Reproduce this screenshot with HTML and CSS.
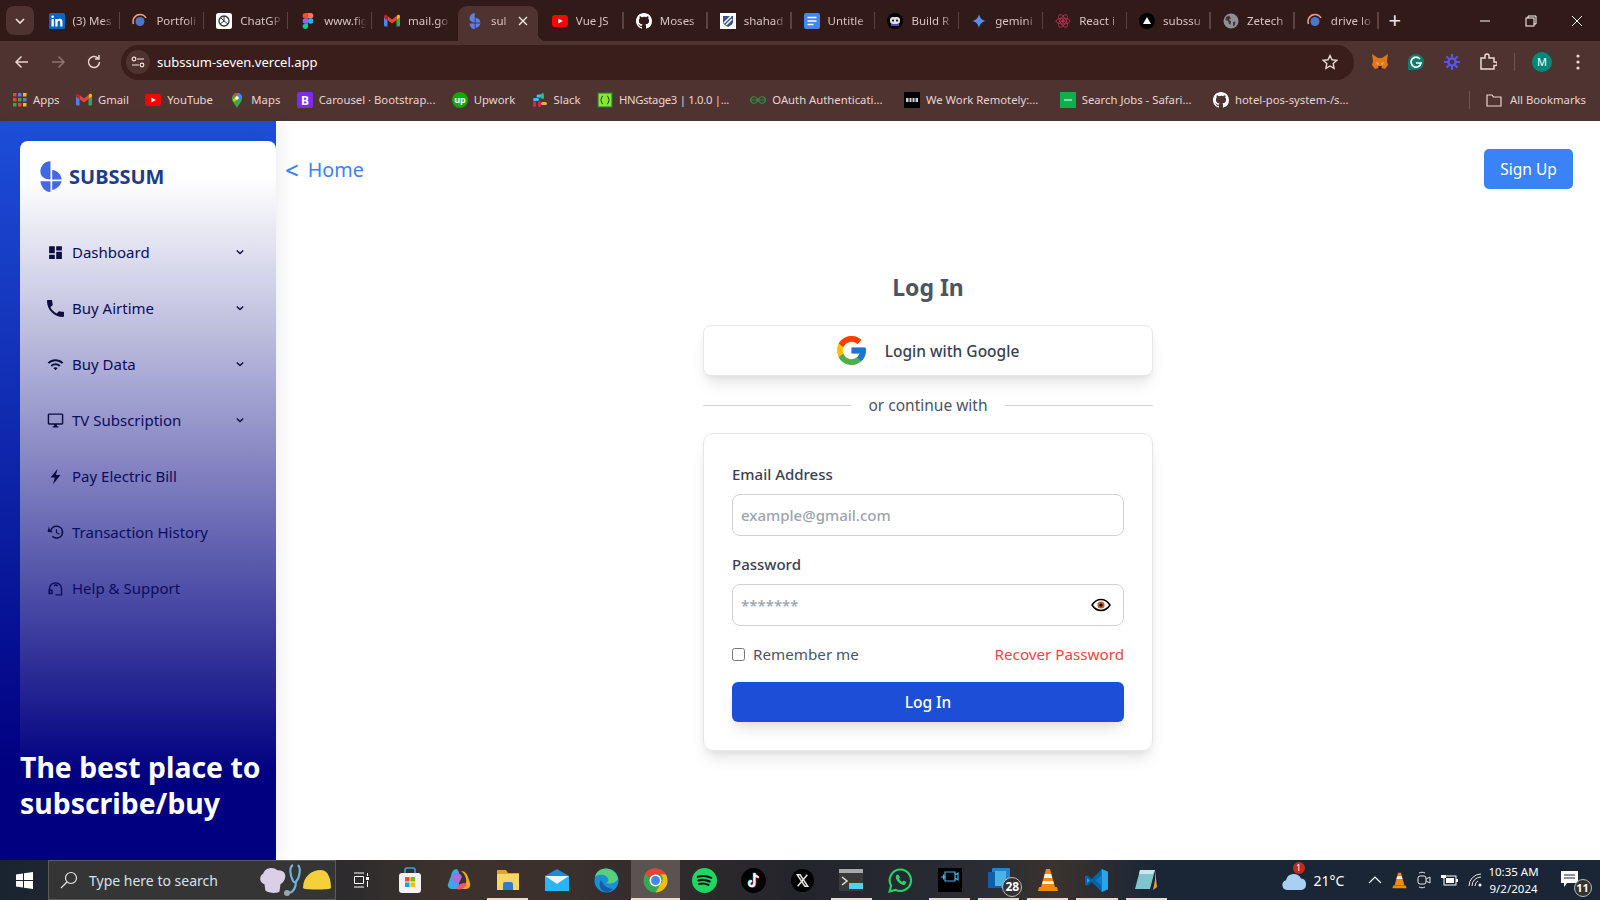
FILE: index.html
```html
<!DOCTYPE html>
<html lang="en">
<head>
    <meta charset="UTF-8">
    <meta name="viewport" content="width=device-width, initial-scale=1.0">
    <title>Subssum - Log In</title>
    <link rel="stylesheet" href="styles.css">
</head>
<body>
    <svg class="defs" width="0" height="0">
        <symbol id="github" viewBox="0 0 16 16"><path fill="#fff" d="M8 0C3.58 0 0 3.58 0 8c0 3.54 2.29 6.53 5.47 7.59.4.07.55-.17.55-.38v-1.34c-2.23.48-2.7-1.07-2.7-1.07-.36-.93-.89-1.17-.89-1.17-.73-.5.05-.49.05-.49.8.06 1.23.82 1.23.82.71 1.23 1.87.87 2.33.66.07-.52.28-.87.5-1.07-1.77-.2-3.64-.89-3.64-3.95 0-.87.31-1.59.82-2.15-.08-.2-.36-1.02.08-2.12 0 0 .67-.21 2.2.82A7.7 7.7 0 0 1 8 3.87c.68 0 1.36.09 2 .27 1.53-1.04 2.2-.82 2.2-.82.44 1.1.16 1.92.08 2.12.51.56.82 1.27.82 2.15 0 3.07-1.87 3.75-3.65 3.95.29.25.54.73.54 1.48v2.2c0 .21.15.46.55.38A8 8 0 0 0 16 8c0-4.42-3.58-8-8-8z"/></symbol>
        <symbol id="gmail" viewBox="0 0 16 16"><path fill="#4285f4" d="M1 13.5h2.5V7L0 4.5V12.500a1 1 0 0 0 1 1z"/><path fill="#34a853" d="M12.500 13.500H15a1 1 0 0 0 1-1V4.500L12.500 7z"/><path fill="#fbbc04" d="M12.500 3v4L16 4.500V3.300c0-1.200-1.400-1.900-2.400-1.200z"/><path fill="#ea4335" d="M3.500 7V3L8 6.400 12.500 3v4L8 10.400z"/><path fill="#c5221f" d="M0 3.300v1.200L3.500 7V3L2.400 2.100C1.400 1.400 0 2.100 0 3.300z"/></symbol>
        <symbol id="youtube" viewBox="0 0 16 16"><rect y="2" width="16" height="12" rx="3" fill="#f00"/><path fill="#fff" d="M6.300 5.400v5.200L10.800 8z"/></symbol>
        <symbol id="globe" viewBox="0 0 16 16"><circle cx="8" cy="8" r="7.500" fill="#8a9199"/><path fill="#4f3331" d="M6 2.500 3 4l-.5 3L5 8l1 3 1.500.5.500-3-2-2 2-1zM10 9l2.500-.5L12 12l-2 1.500z"/></symbol>
        <symbol id="ring" viewBox="0 0 16 16"><circle cx="8" cy="8.500" r="4.500" fill="#4a78c9"/><path fill="none" stroke="#f0a090" stroke-width="1.500" d="M1.500 11A7 7 0 0 1 8 1.500 7 7 0 0 1 14 5"/></symbol>
    </svg>

    <div class="browser">
        <div class="tabstrip">
            <div class="tab-search"><svg width="10" height="6" viewBox="0 0 10 6"><path d="M1 1l4 4 4-4" fill="none" stroke="#f2e4e2" stroke-width="1.600"/></svg></div>
            <div class="tab"><svg width="16" height="16" viewBox="0 0 16 16"><rect width="16" height="16" rx="1.500" fill="#0a66c2"/><path fill="#fff" d="M2.500 6h2.300v7.500H2.500zM3.600 2.500a1.300 1.300 0 1 1 0 2.600 1.300 1.300 0 0 1 0-2.600zM6.300 6h2.200v1c.4-.7 1.200-1.200 2.300-1.200 2.200 0 2.700 1.400 2.700 3.300v4.400h-2.300V9.600c0-.9 0-1.900-1.200-1.900s-1.400.9-1.400 1.900v3.900H6.300z"/></svg><span>(3) Mes</span></div>
            <div class="tab"><svg width="16" height="16"><use href="#ring"/></svg><span>Portfoli</span></div>
            <div class="tab"><svg width="16" height="16" viewBox="0 0 16 16"><rect width="16" height="16" rx="2.500" fill="#fff"/><circle cx="8" cy="8" r="5" fill="none" stroke="#333" stroke-width="1.300"/><path d="M8 3v5l4 3M4 11l4-3M5 5l3 3" fill="none" stroke="#333"/></svg><span>ChatGP</span></div>
            <div class="tab"><svg width="16" height="16" viewBox="0 0 12 18"><path fill="#f24e1e" d="M0 3a3 3 0 0 1 3-3h3v6H3a3 3 0 0 1-3-3z"/><path fill="#ff7262" d="M6 0h3a3 3 0 0 1 0 6H6z"/><path fill="#a259ff" d="M0 9a3 3 0 0 1 3-3h3v6H3a3 3 0 0 1-3-3z"/><circle cx="9" cy="9" r="3" fill="#1abcfe"/><path fill="#0acf83" d="M0 15a3 3 0 0 1 3-3h3v3a3 3 0 0 1-6 0z"/></svg><span>www.fig</span></div>
            <div class="tab"><svg width="16" height="16"><use href="#gmail"/></svg><span>mail.go</span></div>
            <div class="tab tab-active"><svg class="logo-small" width="16" height="16" viewBox="0 0 63 92"><path d="M30 0C12 2 0 14 0 32c0 13 12 23 30 23zM35 27c15 1 27 13 28 28H35zM0 60h30v32C14 92 3 78 0 60zM35 60h28C60 72 50 83 35 86z"/></svg><span>sul</span><svg class="tab-close" width="10" height="10" viewBox="0 0 10 10"><path d="M1 1l8 8M9 1L1 9" stroke="#f2e4e2" stroke-width="1.400"/></svg></div>
            <div class="tab"><svg width="16" height="16"><use href="#youtube"/></svg><span>Vue JS</span></div>
            <div class="tab"><svg width="16" height="16"><use href="#github"/></svg><span>Moses</span></div>
            <div class="tab"><svg width="16" height="16" viewBox="0 0 16 16"><rect width="16" height="16" fill="#fff"/><path fill="#3a4f8f" d="M3 3h10v6c0 2-3 4-5 5-2-1-5-3-5-5z"/><path stroke="#fff" stroke-width="1.500" d="M4 10l7-7M6 12l6-6"/></svg><span>shahad</span></div>
            <div class="tab"><svg width="16" height="16" viewBox="0 0 16 16"><rect width="16" height="16" rx="2" fill="#4285f4"/><path stroke="#fff" stroke-width="1.600" d="M3.500 4.500h9M3.500 8h9M3.500 11.500h6"/></svg><span>Untitle</span></div>
            <div class="tab"><svg width="16" height="16" viewBox="0 0 16 16"><circle cx="8" cy="8" r="8" fill="#000"/><rect x="3" y="4" width="10" height="7" rx="3" fill="#ddd"/><circle cx="6" cy="7.500" r="1" fill="#000"/><circle cx="10" cy="7.500" r="1" fill="#000"/><path d="M4 12h8" stroke="#8a5cf0" stroke-width="1.500"/></svg><span>Build R</span></div>
            <div class="tab"><svg width="16" height="16" viewBox="0 0 16 16"><path fill="#5b8def" d="M8 1c.6 3.800 3.200 6.400 7 7-3.800.6-6.400 3.200-7 7-.6-3.800-3.200-6.400-7-7 3.800-.6 6.400-3.200 7-7z"/></svg><span>gemini</span></div>
            <div class="tab"><svg width="16" height="16" viewBox="0 0 16 16" fill="none" stroke="#b0304f"><ellipse cx="8" cy="8" rx="7" ry="3"/><ellipse cx="8" cy="8" rx="7" ry="3" transform="rotate(60 8 8)"/><ellipse cx="8" cy="8" rx="7" ry="3" transform="rotate(120 8 8)"/><circle cx="8" cy="8" r="1.300" fill="#b0304f"/></svg><span>React i</span></div>
            <div class="tab"><svg width="16" height="16" viewBox="0 0 16 16"><circle cx="8" cy="8" r="8" fill="#000"/><path fill="#fff" d="M8 4l4 7H4z"/></svg><span>subssu</span></div>
            <div class="tab"><svg width="16" height="16"><use href="#globe"/></svg><span>Zetech</span></div>
            <div class="tab"><svg width="16" height="16"><use href="#ring"/></svg><span>drive lo</span></div>
            <div class="tab-new">+</div>
            <div class="win-controls">
                <svg width="12" height="12" viewBox="0 0 12 12"><path d="M1 6h10" stroke="#fff"/></svg>
                <svg width="12" height="12" viewBox="0 0 12 12" fill="none" stroke="#fff"><rect x="1" y="3" width="8" height="8"/><path d="M3 3V1h8v8H9"/></svg>
                <svg width="12" height="12" viewBox="0 0 12 12"><path d="M1 1l10 10M11 1L1 11" stroke="#fff"/></svg>
            </div>
        </div>

        <div class="toolbar">
            <svg class="tool" width="16" height="16" viewBox="0 0 16 16" fill="none" stroke="#e8d5d2" stroke-width="1.500"><path d="M14 8H2M7.500 2.500 2 8l5.500 5.500"/></svg>
            <svg class="tool" width="16" height="16" viewBox="0 0 16 16" fill="none" stroke="#8f7673" stroke-width="1.500"><path d="M2 8h12M8.500 2.500 14 8l-5.500 5.500"/></svg>
            <svg class="tool" width="16" height="16" viewBox="0 0 16 16" fill="none" stroke="#e8d5d2" stroke-width="1.500"><path d="M13.500 8A5.500 5.500 0 1 1 12 4.200M13 1v4H9"/></svg>
            <div class="address">
                <div class="site-info"><svg width="14" height="14" viewBox="0 0 14 14" fill="none" stroke="#f2e4e2" stroke-width="1.200"><path d="M6 4h7M1 10h7"/><circle cx="3" cy="4" r="1.800"/><circle cx="11" cy="10" r="1.800"/></svg></div>
                <span class="url">subssum-seven.vercel.app</span>
                <svg class="star" width="16" height="16" viewBox="0 0 16 16"><path d="M8 1.500l2 4.300 4.700.6-3.500 3.200.9 4.700L8 12l-4.100 2.300.9-4.700L1.300 6.400 6 5.800z" fill="none" stroke="#eadbd8" stroke-width="1.400"/></svg>
            </div>
            <div class="extensions">
                <svg width="18" height="18" viewBox="0 0 18 18"><path fill="#e2761b" d="M1 1l6 4h4l6-4-1 7 1 4-3 4-3-1H7l-3 1-3-4 1-4z"/><path fill="#f6a55b" d="M5 9l3 1-1 3zM13 9l-3 1 1 3z"/><path fill="#33261d" d="M7 13h4l-1 3H8z"/></svg>
                <svg width="18" height="18" viewBox="0 0 18 18"><path fill="#0f7d6c" d="M9 1a8 8 0 0 1 8 8 8 8 0 0 1-8 8H1V9a8 8 0 0 1 8-8z"/><path d="M13 6a5 5 0 1 0 1 4H9" fill="none" stroke="#fff" stroke-width="1.700"/></svg>
                <svg width="18" height="18" viewBox="0 0 18 18" stroke="#5a55e8" stroke-width="2.200"><path d="M9 1v16M1 9h16M3.300 3.300l11.400 11.400M14.700 3.300 3.300 14.700"/><circle cx="9" cy="9" r="3.500" fill="#4f3331"/></svg>
                <svg width="18" height="18" viewBox="0 0 18 18" fill="none" stroke="#eadbd8" stroke-width="1.500"><path d="M2 5h4V3a2 2 0 0 1 4 0v2h5v4h1.500a1.800 1.800 0 0 1 0 3.600H15V16H2z"/></svg>
                <span class="tool-sep"></span>
                <span class="avatar">M</span>
                <svg class="tool-dots" width="4" height="16" viewBox="0 0 4 16" fill="#eadbd8"><circle cx="2" cy="2" r="1.600"/><circle cx="2" cy="8" r="1.600"/><circle cx="2" cy="14" r="1.600"/></svg>
            </div>
        </div>

        <div class="bookmarks">
            <a class="bm"><svg width="14" height="14" viewBox="0 0 14 14"><g fill="#ea4335"><rect width="3.500" height="3.500"/><rect x="5" width="3.500" height="3.500" fill="#4285f4"/><rect x="10" width="3.500" height="3.500" fill="#fbbc04"/><rect y="5" width="3.500" height="3.500" fill="#ea4335"/><rect x="5" y="5" width="3.500" height="3.500" fill="#34a853"/><rect x="10" y="5" width="3.500" height="3.500" fill="#4285f4"/><rect y="10" width="3.500" height="3.500" fill="#34a853"/><rect x="5" y="10" width="3.500" height="3.500" fill="#ea4335"/><rect x="10" y="10" width="3.500" height="3.500" fill="#fbbc04"/></g></svg>Apps</a>
            <a class="bm"><svg width="16" height="16"><use href="#gmail"/></svg>Gmail</a>
            <a class="bm"><svg width="16" height="16"><use href="#youtube"/></svg>YouTube</a>
            <a class="bm"><svg width="16" height="16" viewBox="0 0 16 16"><path fill="#34a853" d="M8 16C6 12 3 10 3 6a5 5 0 0 1 10 0c0 4-3 6-5 10z"/><path fill="#fbbc04" d="M3.500 8 8 3.500l1 3L5 10z"/><path fill="#ea4335" d="M4 3a5 5 0 0 1 5-2L6 5z"/><path fill="#4285f4" d="M9 1a5 5 0 0 1 4 5L9 8z"/><circle cx="8" cy="6" r="1.700" fill="#fff"/></svg>Maps</a>
            <a class="bm"><svg width="16" height="16" viewBox="0 0 16 16"><rect width="16" height="16" rx="2" fill="#7c2bf2"/><text x="8" y="12.500" text-anchor="middle" class="svg-b">B</text></svg>Carousel · Bootstrap...</a>
            <a class="bm"><svg width="16" height="16" viewBox="0 0 16 16"><circle cx="8" cy="8" r="8" fill="#14a800"/><text x="8" y="11" text-anchor="middle" class="svg-up">up</text></svg>Upwork</a>
            <a class="bm"><svg width="16" height="16" viewBox="0 0 16 16"><rect x="6" y="1" width="3" height="6" rx="1.500" fill="#36c5f0" transform="rotate(90 7.500 4)"/><rect x="9" y="1" width="3" height="6" rx="1.500" fill="#2eb67d"/><rect x="1" y="9" width="3" height="6" rx="1.500" fill="#e01e5a"/><rect x="6" y="9" width="3" height="6" rx="1.500" fill="#e01e5a"/><rect x="9" y="10" width="6" height="3" rx="1.500" fill="#ecb22e"/><rect x="1" y="6" width="6" height="3" rx="1.500" fill="#36c5f0"/></svg>Slack</a>
            <a class="bm bm-tight"><svg width="16" height="16" viewBox="0 0 16 16"><rect width="16" height="16" fill="#2d5f3a"/><rect x="1.500" y="1.500" width="13" height="13" fill="#85ea2d"/><path d="M6 4C4 4 5 8 3.500 8 5 8 4 12 6 12M10 4c2 0 1 4 2.500 4-1.500 0-.5 4-2.500 4" fill="none" stroke="#173647"/></svg>HNGstage3 | 1.0.0 |...</a>
            <a class="bm bm-wide"><svg width="16" height="16" viewBox="0 0 16 16" fill="none" stroke="#2f8d46" stroke-width="1.200"><path d="M8 8h7.500A3.500 3.500 0 0 0 9 6.500L8 8l-1 1.500A3.500 3.500 0 0 1 .5 8H8M8 8l1 1.500A3.500 3.500 0 0 0 15.500 8M8 8 7 6.500A3.500 3.500 0 0 0 .5 8"/></svg>OAuth Authenticati...</a>
            <a class="bm bm-wide"><svg width="16" height="16" viewBox="0 0 16 16"><rect width="16" height="16" fill="#000"/><path d="M2 6h12v4H2z" fill="#cfcfcf"/><path d="M5 6v4M8 6v4M11 6v4" stroke="#000"/></svg>We Work Remotely:...</a>
            <a class="bm bm-wide"><svg width="16" height="16" viewBox="0 0 16 16"><rect width="16" height="16" fill="#0db14b"/><path d="M4 8h8" stroke="#fff"/></svg>Search Jobs - Safari...</a>
            <a class="bm bm-wide"><svg width="16" height="16"><use href="#github"/></svg>hotel-pos-system-/s...</a>
            <div class="all-bookmarks">
                <svg width="16" height="16" viewBox="0 0 16 16"><path d="M1 3h5l1.500 2H15v9H1z" fill="none" stroke="#e8d5d2" stroke-width="1.200"/></svg>All Bookmarks
            </div>
        </div>
    </div>

    <div class="app">
        <aside class="sidebar">
            <div class="side-inner">
                <div class="brand">
                    <svg width="22" height="31" viewBox="0 0 63 92" fill="#4169e1"><path d="M30 0C12 2 0 14 0 32c0 13 12 23 30 23zM35 27c15 1 27 13 28 28H35zM0 60h30v32C14 92 3 78 0 60zM35 60h28C60 72 50 83 35 86z"/></svg>
                    <span>SUBSSUM</span>
                </div>
                <nav class="side-nav">
                    <a class="nav-item"><svg class="nav-ic" viewBox="0 0 24 24"><path d="M3 13h8V3H3v10zm0 8h8v-6H3v6zm10 0h8V11h-8v10zm0-18v6h8V3h-8z"/></svg><span>Dashboard</span><svg class="caret" viewBox="0 0 10 6"><path d="M1 1l4 4 4-4"/></svg></a>
                    <a class="nav-item"><svg class="nav-ic" viewBox="3 3 18 18"><path d="M6.620 10.790c1.440 2.830 3.760 5.140 6.590 6.590l2.200-2.200c.27-.27.67-.36 1.020-.24 1.120.37 2.330.57 3.570.57.55 0 1 .45 1 1V20c0 .55-.45 1-1 1-9.390 0-17-7.610-17-17 0-.55.45-1 1-1h3.500c.55 0 1 .45 1 1 0 1.250.2 2.450.57 3.570.11.35.03.74-.25 1.020l-2.200 2.200z"/></svg><span>Buy Airtime</span><svg class="caret" viewBox="0 0 10 6"><path d="M1 1l4 4 4-4"/></svg></a>
                    <a class="nav-item"><svg class="nav-ic" viewBox="0 0 24 24"><path d="M1 9l2 2c4.970-4.970 13.030-4.970 18 0l2-2C16.930 2.930 7.080 2.930 1 9zm8 8l3 3 3-3c-1.650-1.660-4.340-1.660-6 0zm-4-4l2 2c2.760-2.760 7.240-2.760 10 0l2-2C15.140 9.140 8.870 9.140 5 13z"/></svg><span>Buy Data</span><svg class="caret" viewBox="0 0 10 6"><path d="M1 1l4 4 4-4"/></svg></a>
                    <a class="nav-item"><svg class="nav-ic" viewBox="0 0 24 24"><path d="M21 2H3c-1.100 0-2 .9-2 2v12c0 1.100.9 2 2 2h7v2H8v2h8v-2h-2v-2h7c1.100 0 2-.9 2-2V4c0-1.100-.9-2-2-2zm0 14H3V4h18v12z"/></svg><span>TV Subscription</span><svg class="caret" viewBox="0 0 10 6"><path d="M1 1l4 4 4-4"/></svg></a>
                    <a class="nav-item"><svg class="nav-ic" viewBox="0 0 24 24"><path d="M15 1 5 13.500h6L8.500 23 19 10h-6.500z"/></svg><span>Pay Electric Bill</span></a>
                    <a class="nav-item"><svg class="nav-ic" viewBox="0 1 23 23"><path d="M13 3a9 9 0 0 0-8.700 6.700L2.500 4.500.8 11.500l6.800 1-1.500-2.300A7 7 0 1 1 13 19a7 7 0 0 1-5-2.100l-1.400 1.400A9 9 0 1 0 13 3zm-1 5v5l4.300 2.500.7-1.200-3.500-2.100V8z"/></svg><span>Transaction History</span></a>
                    <a class="nav-item"><svg class="nav-ic nav-ic-line" viewBox="0 0 24 24"><path d="M3.500 19v-6.500a8.500 8.500 0 0 1 17 0V19M3 14.500h4V19H3zM20.500 14.500V21H12M10 8.500a3 3 0 0 1 5 0"/></svg><span>Help &amp; Support</span></a>
                </nav>
                <h2 class="tagline">The best place to subscribe/buy</h2>
            </div>
        </aside>

        <main class="content">
            <header class="top-row">
                <a class="home-link"><span class="home-lt">&lt;</span> Home</a>
                <button class="signup-btn">Sign Up</button>
            </header>
            <section class="login">
                <h1>Log In</h1>
                <button class="google-btn">
                    <svg width="29" height="29" viewBox="4 4 40 40"><path fill="#FFC107" d="M43.611 20.083H42V20H24v8h11.303c-1.649 4.657-6.080 8-11.303 8-6.627 0-12-5.373-12-12s5.373-12 12-12c3.059 0 5.842 1.154 7.961 3.039l5.657-5.657C34.046 6.053 29.268 4 24 4 12.955 4 4 12.955 4 24s8.955 20 20 20 20-8.955 20-20c0-1.341-.138-2.650-.389-3.917z"/><path fill="#FF3D00" d="M6.306 14.691l6.571 4.819C14.655 15.108 18.961 12 24 12c3.059 0 5.842 1.154 7.961 3.039l5.657-5.657C34.046 6.053 29.268 4 24 4 16.318 4 9.656 8.337 6.306 14.691z"/><path fill="#4CAF50" d="M24 44c5.166 0 9.860-1.977 13.409-5.192l-6.190-5.238A11.910 11.910 0 0 1 24 36c-5.202 0-9.619-3.317-11.283-7.946l-6.522 5.025C9.505 39.556 16.227 44 24 44z"/><path fill="#1976D2" d="M43.611 20.083H42V20H24v8h11.303a12.040 12.040 0 0 1-4.087 5.571l.003-.002 6.190 5.238C36.971 39.205 44 34 44 24c0-1.341-.138-2.650-.389-3.917z"/></svg>
                    Login with Google
                </button>
                <div class="divider"><span>or continue with</span></div>
                <form class="login-card">
                    <label for="email">Email Address</label>
                    <input id="email" type="email" placeholder="example@gmail.com">
                    <label for="password">Password</label>
                    <div class="pass-wrap">
                        <input id="password" type="password" placeholder="*******">
                        <svg class="eye" width="20" height="14" viewBox="0 0 20 14"><path d="M1 7c2.500-3.800 5.500-5.500 9-5.500S16.500 3.200 19 7c-2.500 3.800-5.500 5.500-9 5.500S3.500 10.800 1 7z" fill="#fff" stroke="#000" stroke-width="1.500"/><circle cx="10" cy="7" r="3.600" fill="#c85a17"/><circle cx="10" cy="7" r="1.600" fill="#000"/></svg>
                    </div>
                    <div class="form-row">
                        <label class="remember"><input type="checkbox">Remember me</label>
                        <a class="recover">Recover Password</a>
                    </div>
                    <button type="button" class="login-btn">Log In</button>
                </form>
            </section>
        </main>
    </div>

    <div class="taskbar">
        <div class="start"><svg width="17" height="17" viewBox="0 0 17 17" fill="#fff"><path d="M0 2.500 7 1.500v6.500H0zM8 1.300 17 0v8H8zM0 9h7v6.500l-7-1zM8 9h9v8l-9-1.300z"/></svg></div>
        <div class="task-search">
            <svg width="18" height="18" viewBox="0 0 18 18" fill="none" stroke="#e6e6e6" stroke-width="1.200"><circle cx="11" cy="7" r="5.500"/><path d="M7 11l-6 6"/></svg>
            <span>Type here to search</span>
            <div class="search-art">
                <svg width="30" height="30" viewBox="0 0 28 28"><path fill="#d9cfe6" d="M6 18c-4-1-6-7-1-10 1-5 9-7 13-3 5-1 9 3 7 8-1 3-3 4-4 5l-1 7c-4 2-10 1-13-1z"/></svg>
                <svg width="24" height="34" viewBox="0 0 24 34" fill="none" stroke="#6fb2dc" stroke-width="2.200"><path d="M10 2C6 4 7 12 10 18c2 3 5-1 6-5 1-4 1-9-1-11M13 18c0 7-3 11-7 12"/><circle cx="4" cy="30" r="3" fill="#9aa5ad" stroke="none"/></svg>
                <svg width="30" height="24" viewBox="0 0 30 24"><path fill="#f5cf3c" d="M1 20C1 9 9 2 19 2c7 0 10 9 10 18 0 2-28 2-28 0z"/></svg>
            </div>
        </div>
        <div class="task-item"><svg width="16" height="16" viewBox="0 0 16 16" fill="none" stroke="#fff"><path d="M1 1h10M1 15h10M1.500 4.500h9v7h-9z"/><path d="M14.500 1v3M14.500 9v6" /><rect x="13" y="5" width="3" height="3" fill="#fff" stroke="none"/></svg></div>
        <div class="task-item"><svg width="24" height="26" viewBox="0 0 24 26"><path d="M7 7V3a2 2 0 0 1 2-2h6a2 2 0 0 1 2 2v4" fill="none" stroke="#2fa8e0" stroke-width="1.600"/><rect x="1" y="6" width="22" height="20" rx="3" fill="#f2f2f2"/><rect x="7" y="10" width="4.500" height="4.500" fill="#f25022"/><rect x="12.500" y="10" width="4.500" height="4.500" fill="#7fba00"/><rect x="7" y="15.500" width="4.500" height="4.500" fill="#00a4ef"/><rect x="12.500" y="15.500" width="4.500" height="4.500" fill="#ffb900"/></svg></div>
        <div class="task-item"><svg width="24" height="24" viewBox="0 0 24 24"><path fill="#3ba7e8" d="M10 1C6 1 5 4 4 8L1 16c-1 3 2 5 4 5h4c2 0 3-2 3-4V4z"/><path fill="#b266e0" d="M6 7c3-3 8-2 9 2l-3 6H8c-2-2-3-6-2-8z"/><path fill="#f5a623" d="M14 3c4 0 6 3 7 6l2 6c1 3-1 6-4 6h-7c4 0 6-3 7-6 1-4-1-9-5-12z"/><path fill="#f2556f" d="M9 21c3 1 8 0 10-3 1-2 0-3-2-3l-4 1z"/></svg></div>
        <div class="task-item on"><svg width="24" height="22" viewBox="0 0 24 22"><path fill="#e0a526" d="M1 1h9l2 3h11v3H1z"/><path fill="#f7d764" d="M1 5h22v16H1z"/><path fill="#2c7fc4" d="M7 21v-6a2 2 0 0 1 2-2h6a2 2 0 0 1 2 2v6z"/></svg></div>
        <div class="task-item"><svg width="24" height="24" viewBox="0 0 24 24"><path fill="#1f8ad8" d="M12 1 0 8v15h24V8z"/><path fill="#29b6f6" d="M0 8l12 8 12-8v15H0z"/><path fill="#e9f6fd" d="M0 8h24l-12 8z"/></svg></div>
        <div class="task-item"><svg width="25" height="25" viewBox="0 0 25 25"><circle cx="12.500" cy="12.500" r="12" fill="#1b8fd6"/><path fill="#56d17b" d="M24 11C23 4 17 .5 12 .5 6 .5 2 4 1 9c3-3 9-3 12 0 2 2 2 5-1 6 4 1 9 1 12-4z"/><path fill="#0f5ea8" d="M12 24C6 23 4 16 7 12c2 4 4 8 12 9-2 2-4 3-7 3z"/></svg></div>
        <div class="task-item task-active"><svg width="25" height="25" viewBox="0 0 24 24"><circle cx="12" cy="12" r="11.500" fill="#34a853"/><path fill="#ea4335" d="M12 .5a11.500 11.500 0 0 1 10 5.800H12a5.700 5.700 0 0 0-5.300 3.500L2 5.300A11.500 11.500 0 0 1 12 .5z"/><path fill="#fbbc04" d="M22 6.300a11.500 11.500 0 0 1-9.900 17.200l4.800-8.400a5.700 5.700 0 0 0 0-8.800z"/><circle cx="12" cy="12" r="5.700" fill="#fff"/><circle cx="12" cy="12" r="4.300" fill="#4285f4"/></svg></div>
        <div class="task-item"><svg width="25" height="25" viewBox="0 0 24 24"><circle cx="12" cy="12" r="12" fill="#1ed760"/><path d="M5.500 8.500c4-1.200 9-1 13 1M6 12c3.500-1 7.500-.8 11 1M6.800 15.300c3-.8 6-.6 9 .9" fill="none" stroke="#111" stroke-width="2" stroke-linecap="round"/></svg></div>
        <div class="task-item"><svg width="25" height="25" viewBox="0 0 24 24"><circle cx="12" cy="12" r="12" fill="#000"/><path d="M13 5v10a2.500 2.500 0 1 1-2.500-2.500M13 5c.3 2.200 1.700 3.500 4 3.800" fill="none" stroke="#25f4ee" stroke-width="2.200" transform="translate(-.6 -.4)"/><path d="M13 5v10a2.500 2.500 0 1 1-2.500-2.500M13 5c.3 2.200 1.700 3.500 4 3.800" fill="none" stroke="#fe2c55" stroke-width="2.200" transform="translate(.6 .4)"/><path d="M13 5v10a2.500 2.500 0 1 1-2.500-2.500M13 5c.3 2.200 1.700 3.500 4 3.800" fill="none" stroke="#fff" stroke-width="1.800"/></svg></div>
        <div class="task-item"><svg width="23" height="23" viewBox="0 0 24 24"><circle cx="12" cy="12" r="12" fill="#000"/><path d="M6.500 6h3l8 12h-3zM17 6l-10 12" fill="none" stroke="#e8e8e8" stroke-width="1.500"/></svg></div>
        <div class="task-item on"><svg width="24" height="22" viewBox="0 0 24 22"><rect width="24" height="22" rx="1" fill="#3a3a3a"/><rect width="24" height="4" fill="#a9a9a9"/><path d="M3 8l5 4-5 4" fill="none" stroke="#ddd" stroke-width="1.600"/><rect x="10" y="14" width="14" height="6" fill="#52d0f2"/></svg></div>
        <div class="task-item"><svg width="25" height="25" viewBox="0 0 24 24"><path d="M12 1.500A10.300 10.300 0 0 0 3 17l-1.500 5.500 5.700-1.500A10.300 10.300 0 1 0 12 1.500z" fill="none" stroke="#25d366" stroke-width="2"/><path fill="#25d366" d="M8.500 6.500c-1.500 1-1.500 3.500.5 6s5 4.500 7 3.500c1.500-1 1.500-2 1.500-2.500L15 12l-1.300 1.300c-1.200-.5-2.700-2-3.200-3.200L11.500 9 10 6.500z"/></svg></div>
        <div class="task-item on"><svg width="24" height="24" viewBox="0 0 24 24"><rect width="24" height="24" fill="#000"/><path d="M7 4h10v9H7zM17 7l3-2v7l-3-2M3 9h5M5.500 6.500v5" fill="none" stroke="#3fb8e8" stroke-width="1.200"/></svg></div>
        <div class="task-item on"><svg width="22" height="24" viewBox="0 0 22 24"><rect x="4" y="0" width="18" height="20" rx="1" fill="#2584c9"/><rect x="0" y="4" width="13" height="16" fill="#0f5ea8"/><rect x="7" y="3" width="11" height="15" fill="#4fb2e5"/></svg><span class="badge-num">28</span></div>
        <div class="task-item on"><svg width="20" height="24" viewBox="0 0 20 24"><path fill="#f08a00" d="M8 1h4l5 18H3z"/><path fill="#f2f2f2" d="M6.800 6h6.400l1 4H5.800zM5 13h10l1 3H4z"/><path fill="#f08a00" d="M1 19h18l1 4H0z"/></svg></div>
        <div class="task-item on"><svg width="25" height="25" viewBox="0 0 24 24"><path fill="#0065a9" d="M17 1 7.500 10.500 3 7 1 8v8l2 1 4.500-3.500L17 23l6-2.500v-17z"/><path fill="#2aa4f0" d="M17 1l6 2.500v17L17 23zM3 9.500v5L5.500 12z"/><path fill="#0f7bc4" d="M17 7l-6 5 6 5z"/></svg></div>
        <div class="task-item on"><svg width="24" height="24" viewBox="0 0 24 24"><path fill="#7fc4cf" d="M6 2h15l-5 19H1z"/><path fill="#c8e8ea" d="M6 2h15l-2 4H5z"/><path fill="#e2a23a" d="M21 2l2 17-4 3 2-10z"/></svg></div>

        <div class="tray">
            <div class="weather">
                <svg width="26" height="22" viewBox="0 0 26 22"><path fill="#a8d0f5" d="M6 21a5 5 0 0 1-1-9.800A8 8 0 0 1 20 9.500 5.800 5.800 0 0 1 20 21z"/></svg>
                <span class="weather-badge">1</span>
                <span>21°C</span>
            </div>
            <div class="tray-icons">
                <svg width="14" height="8" viewBox="0 0 14 8"><path d="M1 7l6-6 6 6" fill="none" stroke="#fff" stroke-width="1.200"/></svg>
                <svg width="15" height="17" viewBox="0 0 20 24"><path fill="#f08a00" d="M8 1h4l5 18H3z"/><path fill="#f2f2f2" d="M6.800 6h6.400l1 4H5.800z"/><path fill="#f08a00" d="M1 19h18l1 4H0z"/></svg>
                <svg width="14" height="18" viewBox="0 0 14 18" fill="none" stroke="#e6e6e6"><rect x="1" y="5" width="8" height="8" rx="2"/><path d="M9 8l4-2v6l-4-2M2 2c2-1 4-1 6 0M2 16c2 1 4 1 6 0"/></svg>
                <svg width="17" height="12" viewBox="0 0 17 12"><rect x="3" y="2" width="12" height="9" fill="none" stroke="#fff"/><rect x="5" y="4" width="8" height="5" fill="#fff"/><path d="M15 5h2v3h-2zM0 1h5v3H0z" fill="#fff"/></svg>
                <svg width="14" height="14" viewBox="0 0 14 14" fill="none" stroke="#e6e6e6"><path d="M1 13A12 12 0 0 1 13 1M4 13a9 9 0 0 1 9-9M7 13a6 6 0 0 1 3-5"/><circle cx="12" cy="12" r="1.500" fill="#fff" stroke="none"/></svg>
            </div>
            <div class="clock"><span>10:35 AM</span><span>9/2/2024</span></div>
            <div class="notify"><svg width="18" height="18" viewBox="0 0 18 18"><path fill="#fff" d="M0 1h17v12H6l-3 4v-4H0z"/><path d="M3 5h11M3 8h11" stroke="#1a2636"/></svg><span class="badge-num badge-notify">11</span></div>
        </div>
    </div>
</body>
</html>
```

FILE: styles.css
```css
* {
    box-sizing: border-box;
}

html, body {
    height: 100%;
}

body {
    margin: 0;
    display: flex;
    flex-direction: column;
    overflow: hidden;
    font-family: "Noto Sans", "Open Sans", sans-serif;
    background: #fff;
}

.defs {
    position: absolute;
}

/* browser chrome */
.browser {
    height: 121px;
    flex: none;
    background: #4f3331;
    color: #e8d5d2;
    font-size: 11.5px;
}

.tabstrip {
    height: 41px;
    display: flex;
    align-items: center;
    padding-left: 6px;
    background: #321a18;
}

.tab-search {
    width: 28px;
    height: 29px;
    margin-right: 2.5px;
    flex: none;
    display: flex;
    align-items: center;
    justify-content: center;
    border-radius: 8px;
    background: #4f3331;
}

.tab {
    width: 83.9px;
    height: 35px;
    margin-top: 6px;
    flex: none;
    position: relative;
    display: flex;
    align-items: center;
    gap: 8px;
    padding: 0 5px 6px 12px;
    color: #d8c4c1;
}

.tab svg {
    flex: none;
}

.tab span {
    flex: 1;
    overflow: hidden;
    white-space: nowrap;
    -webkit-mask-image: linear-gradient(to right, #000 70%, transparent);
    mask-image: linear-gradient(to right, #000 70%, transparent);
}

.tab::after {
    content: "";
    position: absolute;
    right: 0;
    top: 6px;
    width: 1.5px;
    height: 17px;
    background: #5c4240;
}

.tab:nth-child(6)::after,
.tab-active::after {
    display: none;
}

.tab-active {
    background: #4f3331;
    border-radius: 9px 9px 0 0;
    margin-left: 2px;
    margin-right: 1.9px;
    width: 80px;
    padding: 0 10px 6px 9px;
}

.tab-active::before {
    content: "";
    position: absolute;
    right: -8px;
    bottom: 0;
    width: 8px;
    height: 8px;
    background: radial-gradient(circle at 100% 0, transparent 8px, #4f3331 8.5px);
}

.logo-small {
    fill: #5a82e8;
}

.tab-new {
    width: 28px;
    margin-left: 2px;
    padding-bottom: 4px;
    text-align: center;
    font-size: 22px;
    line-height: 1;
    color: #f2e4e2;
}

.win-controls {
    margin-left: auto;
    display: flex;
    gap: 34px;
    padding-right: 17px;
}

.toolbar {
    height: 42px;
    display: flex;
    align-items: center;
    padding-left: 14px;
    border-radius: 9px 9px 0 0;
}

.toolbar .tool {
    margin-right: 20px;
}

.address {
    width: 1233px;
    height: 35px;
    margin-left: -1px;
    display: flex;
    align-items: center;
    padding: 0 5px;
    border-radius: 18px;
    background: #391e1c;
}

.site-info {
    width: 24px;
    height: 24px;
    display: flex;
    align-items: center;
    justify-content: center;
    border-radius: 50%;
    background: #4f3331;
}

.url {
    margin-left: 7px;
    font-size: 13px;
    color: #fff;
}

.star {
    margin-left: auto;
    margin-right: 11px;
}

.extensions {
    flex: 1;
    display: flex;
    align-items: center;
    padding-left: 17px;
    gap: 18px;
}

.tool-sep {
    width: 1px;
    height: 18px;
    margin: 0 -1px;
    background: #6f5552;
}

.avatar {
    width: 20px;
    height: 20px;
    border-radius: 50%;
    background: #00897b;
    color: #fff;
    font-size: 11px;
    line-height: 20px;
    text-align: center;
}

.tool-dots {
    margin-left: 6px;
}

.bookmarks {
    height: 33px;
    display: flex;
    align-items: center;
    padding-left: 13px;
    gap: 16.4px;
    font-size: 11.3px;
    white-space: nowrap;
}

.bm {
    display: flex;
    align-items: center;
    gap: 6px;
}

.bm-wide {
    margin-left: 5px;
}

.bm-tight {
    letter-spacing: -0.3px;
}

.svg-b {
    font: 700 12px "Noto Sans", sans-serif;
    fill: #fff;
}

.svg-up {
    font: 700 9px "Noto Sans", sans-serif;
    fill: #fff;
}

.all-bookmarks {
    margin-left: auto;
    height: 18px;
    display: flex;
    align-items: center;
    gap: 8px;
    padding: 0 14px 0 16px;
    border-left: 1px solid #6f5552;
}

/* app */
.app {
    flex: 1;
    display: flex;
    min-height: 0;
}

.sidebar {
    width: 276px;
    flex: none;
    padding: 20px 0 0 20px;
    background: linear-gradient(#1d4ed8, #000080 88%);
    box-shadow: 6px 0 14px rgba(0, 0, 0, 0.06);
}

.side-inner {
    height: 100%;
    display: flex;
    flex-direction: column;
    border-radius: 8px 8px 0 0;
    background: linear-gradient(#fff 5%, #000080 88%);
}

.brand {
    height: 31px;
    margin: 20px 0 0 20px;
    display: flex;
    align-items: center;
    gap: 7px;
    color: #1e3a8a;
    font-size: 20px;
    font-weight: 700;
}

.side-nav {
    margin-top: 32px;
    display: flex;
    flex-direction: column;
}

.nav-item {
    height: 56px;
    display: flex;
    align-items: center;
    padding-left: 27px;
    gap: 8px;
    color: #0c0c5c;
    font-size: 15px;
}

.nav-ic {
    width: 17px;
    height: 17px;
    fill: #0c0c40;
}

.nav-ic-line {
    fill: none;
    stroke: #0c0c60;
    stroke-width: 2;
}

.caret {
    width: 8px;
    height: 6px;
    margin-left: auto;
    margin-right: 32px;
    fill: none;
    stroke: #111140;
    stroke-width: 1.8;
}

.tagline {
    margin: auto 0 39px;
    color: #fff;
    font-size: 28.4px;
    line-height: 36px;
    font-weight: 700;
}

.content {
    flex: 1;
    padding: 28px 28px 0 8px;
    min-width: 0;
}

.top-row {
    display: flex;
    align-items: center;
    justify-content: space-between;
}

.home-link {
    margin-left: 1px;
    display: flex;
    align-items: center;
    gap: 9px;
    color: #3b82f6;
    font-size: 19.7px;
}

.home-lt {
    font-size: 24px;
    font-weight: 500;
}

.signup-btn {
    width: 89px;
    height: 40px;
    margin-right: -1px;
    border: 0;
    border-radius: 5px;
    background: #3b82f6;
    color: #fff;
    font: 15.5px "Noto Sans", sans-serif;
}

.login {
    width: 450px;
    margin: 0 auto;
    padding-top: 82px;
    display: flex;
    flex-direction: column;
    color: #374151;
}

.login h1 {
    margin: 0 0 22px;
    text-align: center;
    color: #4b5563;
    font-size: 23px;
    line-height: 32px;
    font-weight: 700;
}

.google-btn {
    height: 51px;
    display: flex;
    align-items: center;
    justify-content: center;
    gap: 19px;
    padding-top: 1px;
    border: 1px solid #e5e7eb;
    border-radius: 8px;
    background: #fff;
    color: #374151;
    font: 500 15.5px "Noto Sans", sans-serif;
    box-shadow: 0 10px 15px -3px rgba(0, 0, 0, 0.1), 0 4px 6px -2px rgba(0, 0, 0, 0.05);
}

.divider {
    margin: 18px 0 17px;
    height: 22px;
    display: flex;
    align-items: center;
    gap: 17px;
    font-size: 15.5px;
    color: #4b5563;
}

.divider::before,
.divider::after {
    content: "";
    flex: 1;
    height: 1px;
    background: #d1d5db;
}

.login-card {
    padding: 28px;
    display: flex;
    flex-direction: column;
    border: 1px solid #e5e7eb;
    border-radius: 10px;
    box-shadow: 0 10px 15px -3px rgba(0, 0, 0, 0.1), 0 4px 6px -2px rgba(0, 0, 0, 0.05);
}

.login-card > label {
    margin-bottom: 8px;
    font-size: 15px;
    line-height: 24px;
    font-weight: 500;
}

.login-card input:not([type=checkbox]) {
    width: 100%;
    height: 42px;
    padding: 0 8px;
    border: 1px solid #d1d0dc;
    border-radius: 8px;
    font: 500 15px "Noto Sans", sans-serif;
    outline: none;
    display: block;
}

.login-card input::placeholder {
    color: #9ca3af;
}

#email {
    margin-bottom: 16px;
}

.pass-wrap {
    position: relative;
}

.eye {
    position: absolute;
    right: 13px;
    top: 14px;
}

.form-row {
    margin: 16px 0;
    height: 24px;
    display: flex;
    align-items: center;
    justify-content: space-between;
    font-size: 15.2px;
}

.remember {
    display: flex;
    align-items: center;
    gap: 8px;
    color: #4b5563;
}

.remember input {
    width: 13px;
    height: 13px;
    margin: 0;
}

.recover {
    color: #ef4444;
}

.login-btn {
    height: 40px;
    border: 0;
    border-radius: 6px;
    background: #1d4ed8;
    color: #fff;
    font: 500 15.5px "Noto Sans", sans-serif;
    box-shadow: 0 10px 15px -3px rgba(0, 0, 0, 0.1), 0 4px 6px -2px rgba(0, 0, 0, 0.05);
}

/* windows taskbar */
.taskbar {
    height: 40px;
    flex: none;
    display: flex;
    align-items: stretch;
    background: linear-gradient(to right, #1a2430 0%, #2a2a2e 20%, #3d312c 28%, #3a302c 36%, #23242c 50%, #2a2d33 62%, #3b332e 66%, #1a2636 72%, #1a2636 100%);
    color: #fff;
    font-size: 11.5px;
}

.start {
    width: 48px;
    flex: none;
    display: flex;
    align-items: center;
    justify-content: center;
}

.task-search {
    width: 288px;
    flex: none;
    display: flex;
    align-items: center;
    padding-left: 11px;
    gap: 11px;
    border: 1px solid #5a5a5a;
    background: #353535;
    color: #d5e3ee;
    font-size: 14px;
}

.search-art {
    margin-left: auto;
    display: flex;
    align-items: center;
    padding-right: 3px;
}

.search-art svg + svg {
    margin-left: -5px;
}

.task-item {
    width: 49.1px;
    flex: none;
    position: relative;
    display: flex;
    align-items: center;
    justify-content: center;
}

.task-item.on::after {
    content: "";
    position: absolute;
    left: 4px;
    right: 4px;
    bottom: 0;
    height: 2px;
    background: #f7d9bd;
}

.task-active {
    background: #5a5350;
}

.task-active::after {
    content: "";
    position: absolute;
    left: 0;
    right: 0;
    bottom: 0;
    height: 2px;
    background: #f7d9bd;
}

.badge-num {
    position: absolute;
    right: 1px;
    bottom: 3px;
    width: 20px;
    height: 20px;
    border-radius: 50%;
    border: 1px solid #bbb;
    background: #333;
    color: #fff;
    text-align: center;
    line-height: 18px;
    font-size: 12px;
    font-weight: 700;
}

.tray {
    flex: 1;
    display: flex;
    align-items: center;
    padding-left: 110px;
}

.weather {
    position: relative;
    display: flex;
    align-items: center;
    gap: 7px;
    font-size: 14px;
}

.weather-badge {
    position: absolute;
    left: 12px;
    top: -7px;
    width: 12px;
    height: 12px;
    border-radius: 50%;
    background: #c42b1c;
    font-size: 9px;
    line-height: 12px;
    text-align: center;
}

.tray-icons {
    margin-left: 24px;
    display: flex;
    align-items: center;
    gap: 10px;
}

.clock {
    margin-left: 6px;
    display: flex;
    flex-direction: column;
    align-items: center;
    line-height: 17px;
}

.notify {
    margin-left: 22px;
    position: relative;
    width: 24px;
    height: 24px;
    margin-top: 4px;
}

.badge-notify {
    right: -7px;
    bottom: -3px;
    width: 18px;
    height: 18px;
    line-height: 16px;
    font-size: 11px;
}
```
